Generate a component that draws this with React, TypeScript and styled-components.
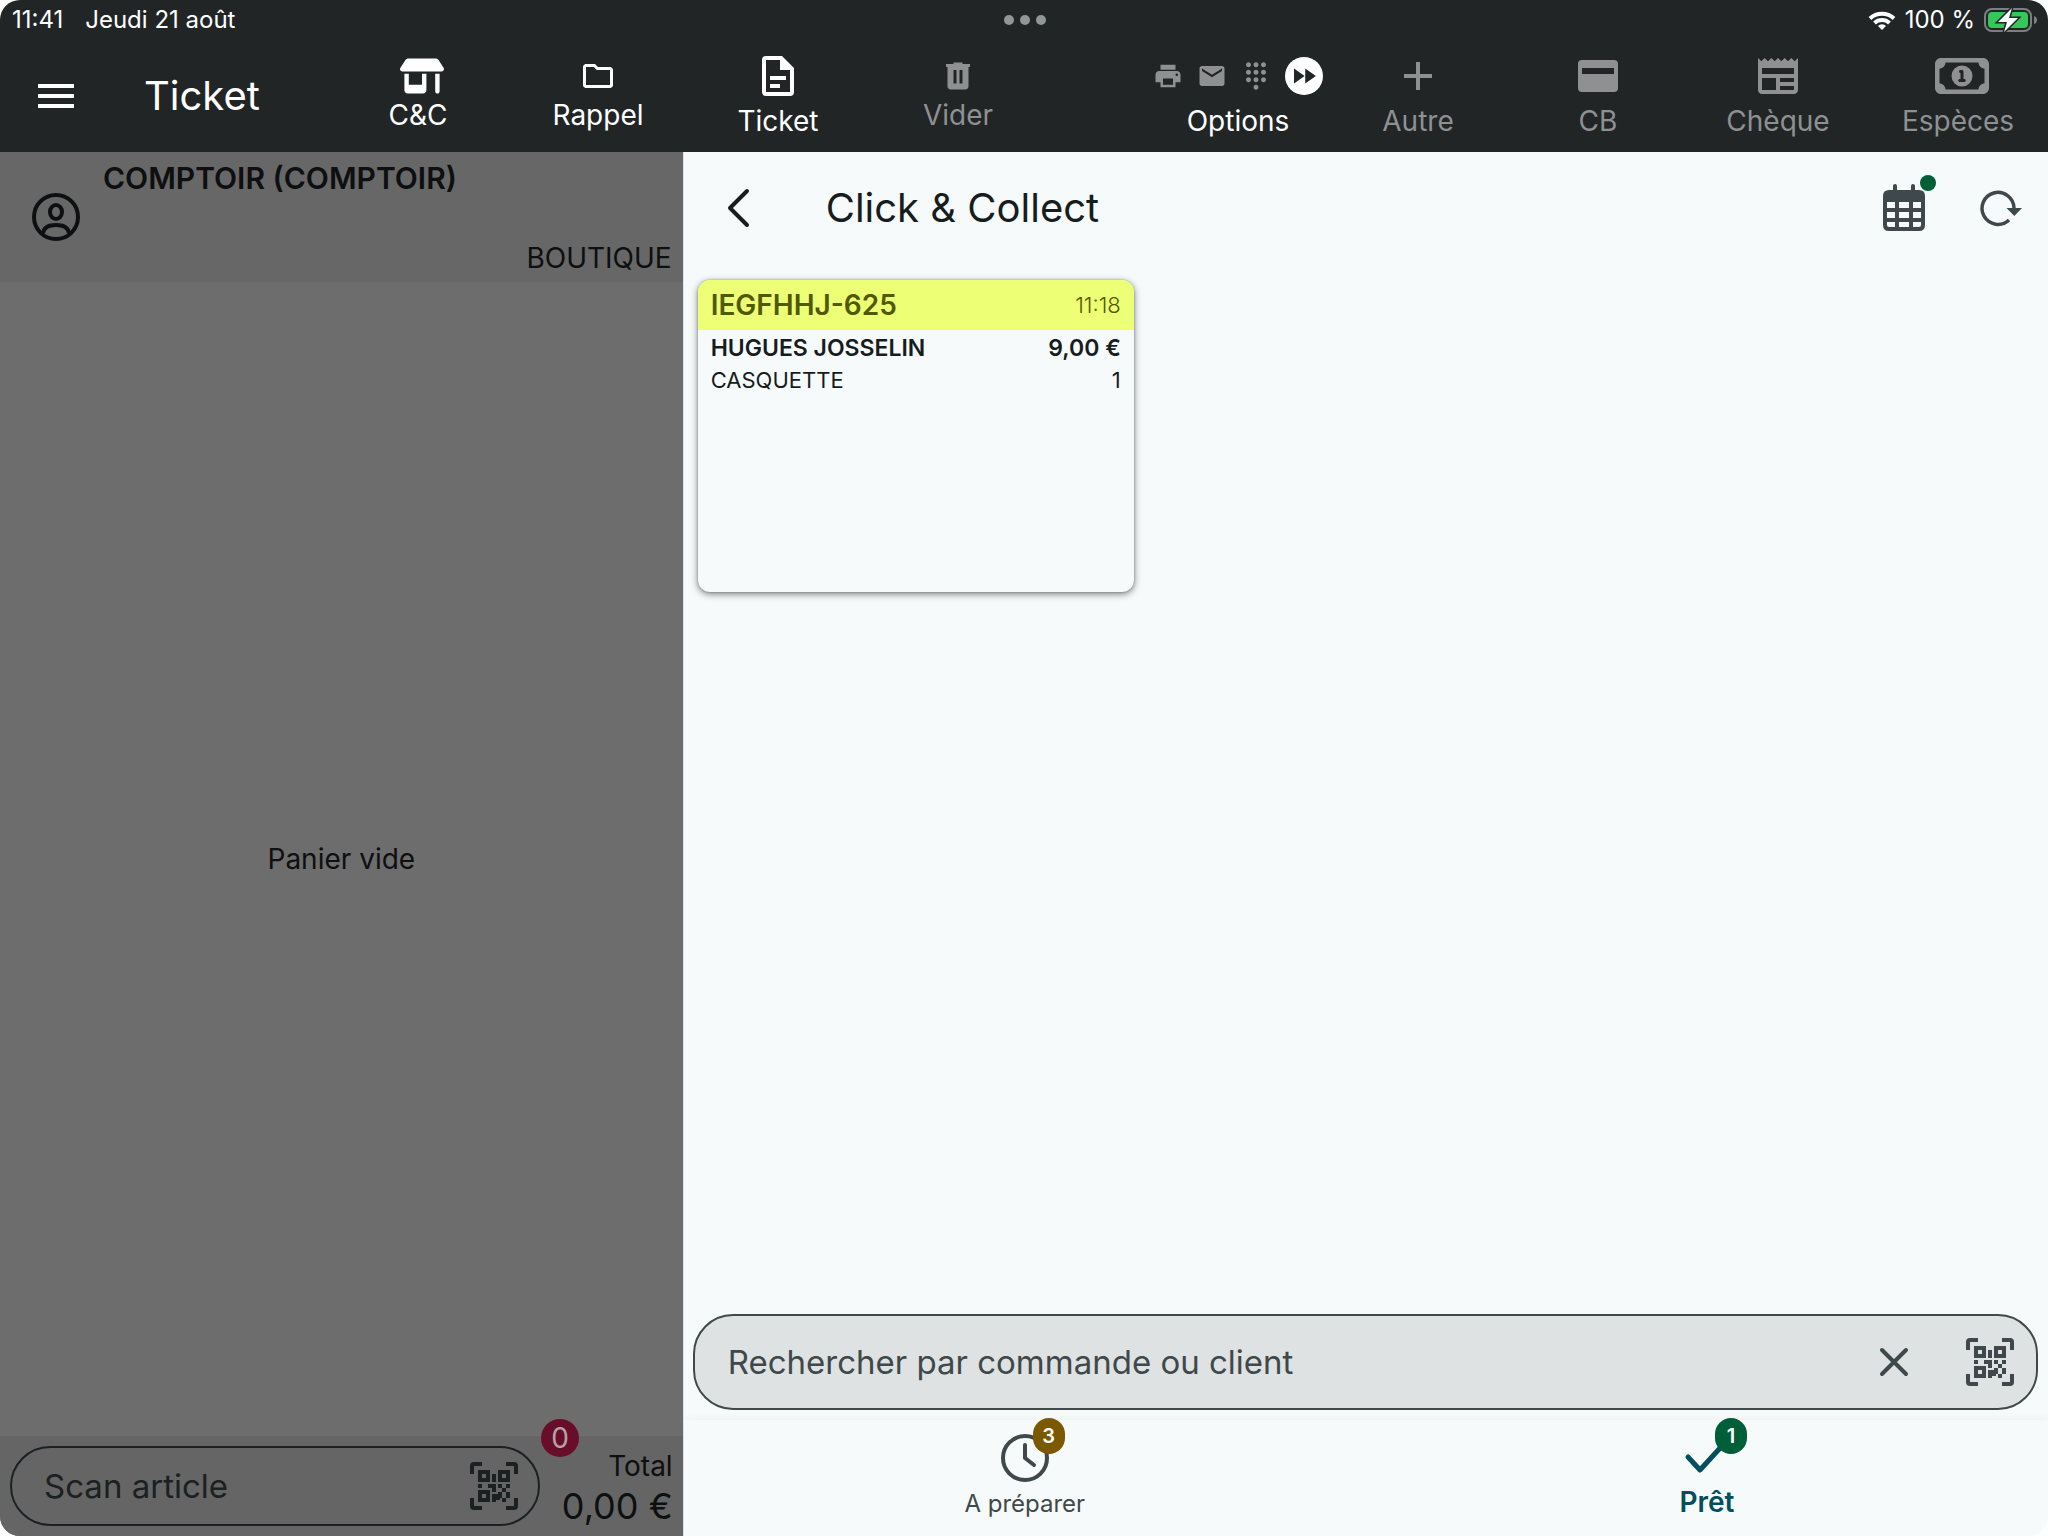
import React from 'react';
import styled, { createGlobalStyle, css } from 'styled-components';
import { FaShop, FaRegMoneyBill1 } from 'react-icons/fa6';
import {
  MdAdd,
  MdDialpad,
  MdEmail,
  MdFastForward,
  MdMenu,
  MdNewspaper,
  MdPrint,
} from 'react-icons/md';

const Global = createGlobalStyle`
  *, *::before, *::after { box-sizing: border-box; }
  html, body, #root { height: 100%; }
  body {
    margin: 0;
    background: #ffffff;
    font-family: Inter, "Liberation Sans", sans-serif;
    -webkit-font-smoothing: antialiased;
  }
  button, input { font: inherit; color: inherit; }
  button { border: 0; padding: 0; background: none; cursor: pointer; }
  svg { display: block; flex: none; }
  h1, h2, p { margin: 0; font-weight: 400; }
`;

const Screen = styled.div`
  min-height: 100%;
  display: flex;
  flex-direction: column;
  border-radius: 20px;
  overflow: hidden;
  background: #f6fafb;
`;

const Header = styled.header`
  height: 152px;
  display: flex;
  flex-direction: column;
  background: #212526;
  color: #ffffff;
`;

const StatusBar = styled.div`
  height: 40px;
  display: grid;
  grid-template-columns: 1fr auto 1fr;
  align-items: center;
  padding: 0 10px 0 12px;
  font-size: 24px;
  line-height: 28px;
`;

const StatusGroup = styled.div<{ $end?: boolean; $gap: number }>`
  display: flex;
  align-items: center;
  gap: ${(p) => p.$gap}px;
  justify-content: ${(p) => (p.$end ? 'flex-end' : 'flex-start')};
`;

const Toolbar = styled.div`
  flex: 1;
  display: flex;
`;

const MenuArea = styled.div`
  width: 328px;
  display: flex;
  align-items: center;
  gap: 64px;
  padding-left: 32px;
`;

const IconButton = styled.button<{ $size: number }>`
  width: ${(p) => p.$size}px;
  height: ${(p) => p.$size}px;
  flex: none;
  display: flex;
  align-items: center;
  justify-content: center;
`;

const AppTitle = styled.h1`
  font-size: 40px;
  line-height: 52px;
`;

const Actions = styled.nav`
  flex: 1;
  display: grid;
  grid-template-columns: repeat(4, 180fr) 280fr repeat(4, 180fr);
`;

const Action = styled.button<{ $muted?: boolean; $small?: boolean; $end?: boolean }>`
  display: flex;
  flex-direction: column;
  align-items: center;
  justify-self: ${(p) => (p.$end ? 'end' : 'stretch')};
  padding-right: ${(p) => (p.$end ? 5 : 0)}px;
  color: ${(p) => (p.$muted ? '#8f9092' : '#ffffff')};
  font-size: 28px;
  line-height: 34px;
  gap: ${(p) => (p.$small ? 2 : 8)}px;
`;

const ActionIcons = styled.span<{ $wide?: boolean }>`
  height: 56px;
  padding-top: 16px;
  padding-left: ${(p) => (p.$wide ? 8 : 0)}px;
  display: flex;
  align-items: center;
  justify-content: center;
  gap: 14px;
`;

const MutedIcon = styled.span`
  color: #8f9092;
`;

const ForwardDisc = styled.span`
  width: 38px;
  height: 38px;
  display: flex;
  align-items: center;
  justify-content: center;
  border-radius: 50%;
  background: #ffffff;
  color: #212526;
`;

const Body = styled.div`
  flex: 1;
  display: grid;
  grid-template-columns: minmax(0, 1fr) minmax(0, 2fr);
`;

const Basket = styled.aside`
  display: flex;
  flex-direction: column;
  background: #6d6d6d;
  color: #0d0f10;
`;

const Customer = styled.section`
  height: 130px;
  display: flex;
  align-items: center;
  gap: 22px;
  padding: 0 11px 0 31px;
  background: #676767;
`;

const CustomerText = styled.div`
  flex: 1;
  align-self: stretch;
  display: flex;
  flex-direction: column;
  justify-content: space-between;
  padding: 9px 0 7px;
  font-size: 28px;
  line-height: 34px;
`;

const CustomerName = styled.strong`
  font-weight: 600;
  font-size: 30px;
`;

const Shop = styled.span`
  text-align: right;
`;

const EmptyBasket = styled.p`
  flex: 1;
  display: flex;
  align-items: center;
  justify-content: center;
  font-size: 28px;
  line-height: 34px;
`;

const BasketFooter = styled.footer`
  height: 100px;
  display: flex;
  align-items: center;
  padding: 0 10px;
  background: #656565;
`;

const fieldBase = css`
  display: flex;
  align-items: center;
  border: 2px solid #3f484a;
`;

const ScanField = styled.div`
  ${fieldBase}
  width: 530px;
  height: 80px;
  border-color: #1b2022;
  border-radius: 40px;
  padding: 0 18px 0 32px;
  color: #1b2022;
`;

const Input = styled.input`
  flex: 1;
  min-width: 0;
  border: 0;
  padding: 0;
  outline: 0;
  background: none;
  font-size: 33px;
  line-height: 40px;
  &::placeholder { color: inherit; opacity: 1; }
`;

const Totals = styled.div`
  position: relative;
  flex: 1;
  display: flex;
  flex-direction: column;
  align-items: flex-end;
`;

const TotalLabel = styled.span`
  font-size: 28px;
  line-height: 40px;
`;

const TotalValue = styled.span`
  font-size: 36px;
  line-height: 40px;
`;

const CountBadge = styled.span`
  position: absolute;
  top: -27px;
  left: 1px;
  width: 38px;
  height: 38px;
  display: flex;
  align-items: center;
  justify-content: center;
  border-radius: 50%;
  background: #680e2b;
  color: #b4a3a8;
  font-size: 28px;
  line-height: 34px;
`;

const Orders = styled.main`
  display: flex;
  flex-direction: column;
  border-left: 1px solid #dfe3e4;
  background: #f6fafb;
  color: #171c1e;
`;

const OrdersBar = styled.div`
  height: 112px;
  display: flex;
  align-items: center;
  gap: 62px;
  padding: 0 20px 0 28px;
`;

const OrdersTitle = styled.h2`
  flex: 1;
  font-size: 40px;
  line-height: 52px;
`;

const BarTools = styled.div`
  display: flex;
  gap: 40px;
  color: #3f484a;
`;

const Anchor = styled.span`
  position: relative;
  display: block;
`;

const Dot = styled.span`
  position: absolute;
  top: -8px;
  right: -10px;
  width: 16px;
  height: 16px;
  border-radius: 50%;
  background: #005e38;
`;

const Grid = styled.div`
  flex: 1;
  display: grid;
  grid-template-columns: repeat(3, minmax(0, 1fr));
  align-content: start;
  gap: 14px;
  padding: 16px 14px;
`;

const Card = styled.article`
  min-height: 312px;
  border-radius: 12px;
  overflow: hidden;
  background: #f6fafb;
  box-shadow: 0 2px 7px rgba(0, 0, 0, 0.5), 0 0 2px rgba(0, 0, 0, 0.3);
`;

const CardHead = styled.header`
  height: 50px;
  display: flex;
  align-items: center;
  justify-content: space-between;
  padding: 0 13px;
  background: #edff74;
  color: #505900;
  font-size: 22px;
  line-height: 32px;
`;

const OrderCode = styled.strong`
  font-size: 28px;
  font-weight: 600;
`;

const OrderTime = styled.time`
  font-weight: 300;
`;

const CardBody = styled.div`
  padding: 2px 13px;
`;

const Line = styled.p<{ $bold?: boolean }>`
  display: flex;
  justify-content: space-between;
  font-size: ${(p) => (p.$bold ? 23 : 22)}px;
  line-height: 32px;
  font-weight: ${(p) => (p.$bold ? 600 : 400)};
`;

const SearchRow = styled.div`
  padding: 0 10px 10px 9px;
`;

const SearchField = styled.div`
  ${fieldBase}
  height: 96px;
  border-radius: 40px;
  padding: 0 20px 0 33px;
  background: #dee2e3;
  color: #3f484a;
`;

const FieldTools = styled.div`
  display: flex;
  align-items: center;
  gap: 48px;
`;

const Tabs = styled.nav`
  height: 116px;
  display: grid;
  grid-template-columns: 1fr 1fr;
  background: #f6fafb;
  box-shadow: 0 -2px 8px rgba(0, 0, 0, 0.03);
`;

const Tab = styled.button<{ $active?: boolean }>`
  display: flex;
  flex-direction: column;
  align-items: center;
  padding-top: 14px;
  color: ${(p) => (p.$active ? '#004f5d' : '#3f484a')};
  font-size: ${(p) => (p.$active ? 28 : 24)}px;
  line-height: 32px;
  font-weight: ${(p) => (p.$active ? 600 : 400)};
  gap: ${(p) => (p.$active ? 4 : 6)}px;
`;

const TabBadge = styled.span<{ $tone: string }>`
  position: absolute;
  top: -16px;
  left: 32px;
  width: 32px;
  height: 36px;
  display: flex;
  align-items: center;
  justify-content: center;
  border-radius: 16px;
  background: ${(p) => p.$tone};
  color: #ffffff;
  font-size: 20px;
  line-height: 24px;
  font-weight: 600;
`;

const TicketIcon = () => (
  <svg width="48" height="48" viewBox="0 0 24 24" fill="currentColor" aria-hidden>
    <path d="M6 2A2 2 0 0 0 4 4V20A2 2 0 0 0 6 22H18A2 2 0 0 0 20 20V8L14 2H6M6 4H13V9H18V20H6V4M8 12V14H16V12H8M8 16V18H13V16H8Z" />
  </svg>
);

const FolderIcon = () => (
  <svg width="36" height="36" viewBox="0 0 24 24" fill="currentColor" aria-hidden>
    <path d="M4 20q-.825 0-1.412-.587T2 18V6q0-.825.588-1.412T4 4h6l2 2h8q.825 0 1.413.588T22 8v10q0 .825-.587 1.413T20 20zm0-2h16V8h-8.825l-2-2H4z" />
  </svg>
);

const BinIcon = () => (
  <svg width="36" height="36" viewBox="0 0 24 24" fill="currentColor" aria-hidden>
    <path d="M7 21q-.825 0-1.412-.587T5 19V6H4V4h5V3h6v1h5v2h-1v13q0 .825-.587 1.413T17 21zm2-4h2V8H9zm4 0h2V8h-2z" />
  </svg>
);

const CardIcon = () => (
  <svg width="48" height="48" viewBox="0 0 24 24" fill="currentColor" aria-hidden>
    <path fillRule="evenodd" d="M4 4h16q2 0 2 2v12q0 2-2 2H4q-2 0-2-2V6q0-2 2-2zm0 4v3h16V8z" />
  </svg>
);

const PersonIcon = () => (
  <svg width="50" height="50" viewBox="0 0 50 50" fill="none" stroke="currentColor" strokeWidth="4" aria-hidden>
    <circle cx="25" cy="25" r="22" />
    <ellipse cx="25" cy="20" rx="6" ry="7" />
    <path d="M12 41C13 35 18 33 25 33s12 2 13 8" />
  </svg>
);

const BackIcon = () => (
  <svg width="52" height="52" viewBox="0 0 52 52" fill="none" stroke="currentColor" strokeWidth="4" strokeLinecap="round" strokeLinejoin="round" aria-hidden>
    <path d="M35 9 18 26l17 17" />
  </svg>
);

const CalendarIcon = () => (
  <svg width="44" height="50" viewBox="0 0 44 50" fill="currentColor" aria-hidden>
    <path fillRule="evenodd" d="M11 3a2 2 0 0 1 4 0v4h14V3a2 2 0 0 1 4 0v4h4q6 0 6 6v29q0 6-6 6H7q-6 0-6-6V13q0-6 6-6h4zM5 19v6h8v-6zm12 0v6h10v-6zm14 0v6h8v-6zM5 29v6h8v-6zm12 0v6h10v-6zm14 0v6h8v-6zM5 39v3q0 2 2 2h6v-5zm12 0v5h10v-5zm14 0v5h6q2 0 2-2v-3z" />
  </svg>
);

const RefreshIcon = () => (
  <svg width="44" height="44" viewBox="0 0 44 44" fill="none" stroke="currentColor" strokeWidth="3.500" aria-hidden>
    <path d="M31 34A16 16 0 1 1 36 22" />
    <path d="M28.500 22H44l-7.700 8z" fill="currentColor" stroke="none" />
  </svg>
);

const CloseIcon = () => (
  <svg width="32" height="32" viewBox="0 0 32 32" fill="none" stroke="currentColor" strokeWidth="4" strokeLinecap="round" aria-hidden>
    <path d="m4 4 24 24M28 4 4 28" />
  </svg>
);

const ClockIcon = () => (
  <svg width="48" height="48" viewBox="0 0 48 48" fill="none" stroke="currentColor" strokeWidth="4" strokeLinecap="round" strokeLinejoin="round" aria-hidden>
    <circle cx="24" cy="24" r="22" />
    <path d="M24 11v13l9 7" />
  </svg>
);

const CheckIcon = () => (
  <svg width="48" height="48" viewBox="0 0 48 48" fill="none" stroke="currentColor" strokeWidth="5" strokeLinecap="round" strokeLinejoin="round" aria-hidden>
    <path d="m5 23 12 13L38 13" />
  </svg>
);

const ScanIcon = () => (
  <svg width="48" height="48" viewBox="0 0 24 24" fill="currentColor" aria-hidden>
    <path d="M0 6V2q0-2 2-2h4v2H2v4zM18 0h4q2 0 2 2v4h-2V2h-4zM0 18h2v4h4v2H2q-2 0-2-2zM22 18h2v4q0 2-2 2h-4v-2h4z" />
    <path fillRule="evenodd" d="M4 4h6v6H4zm2 2v2h2V6zM14 4h6v6h-6zm2 2v2h2V6zM4 14h6v6H4zm2 2v2h2v-2z" />
    <path d="M11 6h2v4h-2zM4 11h2v2H4zM9 11h4v4h-2v-2H9zM14 11h2v2h-2zM18 11h2v2h-2zM16 13h2v2h-2zM14 15h2v3h-1v1h-2v1h-2v-4h3zM18 15h2v3h-2zM16 18h2v2h-2z" />
  </svg>
);

const WifiIcon = () => (
  <svg width="28" height="21" viewBox="0 0 28 21" fill="none" stroke="currentColor" strokeWidth="4" aria-hidden>
    <path d="M2 8.500a17.500 17.500 0 0 1 24 0" />
    <path d="M6.500 13a11 11 0 0 1 15 0" />
    <path d="m14 20-4-4a5.600 5.600 0 0 1 8 0z" fill="currentColor" stroke="none" />
  </svg>
);

const BatteryIcon = () => (
  <svg width="54" height="26" viewBox="0 0 54 26" aria-hidden>
    <rect x="1" y="2" width="46" height="22" rx="7" fill="none" stroke="#7d8081" strokeWidth="2" />
    <rect x="4" y="5" width="40" height="16" rx="4" fill="#34c759" />
    <path d="M50 9q3 1 3 4t-3 4z" fill="#7d8081" />
    <path d="M28 1 14 15h9l-3 10 14-14h-9z" fill="#ffffff" stroke="#212526" strokeWidth="3" paintOrder="stroke" />
  </svg>
);

const DotsIcon = () => (
  <svg width="42" height="12" viewBox="0 0 42 12" fill="#919697" aria-hidden>
    <circle cx="5" cy="6" r="5" />
    <circle cx="21" cy="6" r="5" />
    <circle cx="37" cy="6" r="5" />
  </svg>
);

export default function App() {
  return (
    <Screen>
      <Global />
      <Header>
        <StatusBar>
          <StatusGroup $gap={22}>
            <span>11:41</span>
            <span>Jeudi 21 août</span>
          </StatusGroup>
          <DotsIcon />
          <StatusGroup $end $gap={9}>
            <WifiIcon />
            <span>100 %</span>
            <BatteryIcon />
          </StatusGroup>
        </StatusBar>
        <Toolbar>
          <MenuArea>
            <IconButton $size={48} aria-label="Menu"><MdMenu size={48} /></IconButton>
            <AppTitle>Ticket</AppTitle>
          </MenuArea>
          <Actions>
            <Action $small><ActionIcons $wide><FaShop size={44} /></ActionIcons>C&amp;C</Action>
            <Action $small><ActionIcons><FolderIcon /></ActionIcons>Rappel</Action>
            <Action><ActionIcons><TicketIcon /></ActionIcons>Ticket</Action>
            <Action $small $muted><ActionIcons><BinIcon /></ActionIcons>Vider</Action>
            <Action $end>
              <ActionIcons>
                <MutedIcon><MdPrint size={30} /></MutedIcon>
                <MutedIcon><MdEmail size={30} /></MutedIcon>
                <MutedIcon><MdDialpad size={30} /></MutedIcon>
                <ForwardDisc><MdFastForward size={30} /></ForwardDisc>
              </ActionIcons>
              Options
            </Action>
            <Action $muted><ActionIcons><MdAdd size={48} /></ActionIcons>Autre</Action>
            <Action $muted><ActionIcons><CardIcon /></ActionIcons>CB</Action>
            <Action $muted><ActionIcons><MdNewspaper size={48} /></ActionIcons>Chèque</Action>
            <Action $muted><ActionIcons $wide><FaRegMoneyBill1 size={54} /></ActionIcons>Espèces</Action>
          </Actions>
        </Toolbar>
      </Header>
      <Body>
        <Basket>
          <Customer>
            <PersonIcon />
            <CustomerText>
              <CustomerName>COMPTOIR (COMPTOIR)</CustomerName>
              <Shop>BOUTIQUE</Shop>
            </CustomerText>
          </Customer>
          <EmptyBasket>Panier vide</EmptyBasket>
          <BasketFooter>
            <ScanField>
              <Input type="text" placeholder="Scan article" aria-label="Scan article" />
              <IconButton $size={52} aria-label="Scanner"><ScanIcon /></IconButton>
            </ScanField>
            <Totals>
              <CountBadge>0</CountBadge>
              <TotalLabel>Total</TotalLabel>
              <TotalValue>0,00 €</TotalValue>
            </Totals>
          </BasketFooter>
        </Basket>
        <Orders>
          <OrdersBar>
            <IconButton $size={52} aria-label="Retour"><BackIcon /></IconButton>
            <OrdersTitle>Click &amp; Collect</OrdersTitle>
            <BarTools>
              <IconButton $size={56} aria-label="Calendrier">
                <Anchor><CalendarIcon /><Dot /></Anchor>
              </IconButton>
              <IconButton $size={56} aria-label="Actualiser"><RefreshIcon /></IconButton>
            </BarTools>
          </OrdersBar>
          <Grid>
            <Card>
              <CardHead>
                <OrderCode>IEGFHHJ-625</OrderCode>
                <OrderTime>11:18</OrderTime>
              </CardHead>
              <CardBody>
                <Line $bold><span>HUGUES JOSSELIN</span><span>9,00 €</span></Line>
                <Line><span>CASQUETTE</span><span>1</span></Line>
              </CardBody>
            </Card>
          </Grid>
          <SearchRow>
            <SearchField>
              <Input type="text" placeholder="Rechercher par commande ou client" aria-label="Rechercher par commande ou client" />
              <FieldTools>
                <IconButton $size={44} aria-label="Effacer"><CloseIcon /></IconButton>
                <IconButton $size={52} aria-label="Scanner"><ScanIcon /></IconButton>
              </FieldTools>
            </SearchField>
          </SearchRow>
          <Tabs>
            <Tab>
              <Anchor><ClockIcon /><TabBadge $tone="#7a5900">3</TabBadge></Anchor>
              A préparer
            </Tab>
            <Tab $active>
              <Anchor><CheckIcon /><TabBadge $tone="#005e38">1</TabBadge></Anchor>
              Prêt
            </Tab>
          </Tabs>
        </Orders>
      </Body>
    </Screen>
  );
}
